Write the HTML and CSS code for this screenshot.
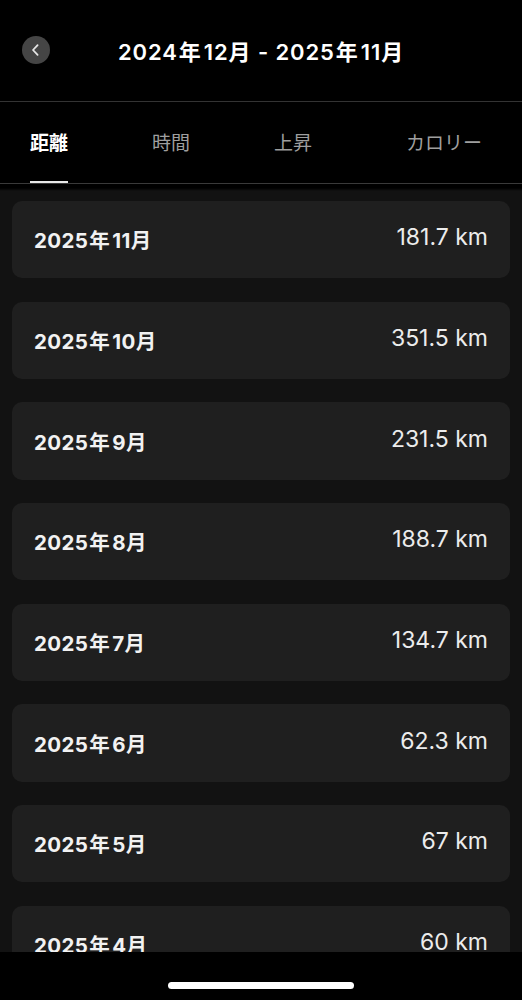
FILE: index.html
```html
<!DOCTYPE html>
<html lang="ja">
<head>
<meta charset="utf-8">
<title>2024年12月 - 2025年11月</title>
<link rel="stylesheet" href="styles.css">
</head>
<body>
<div class="screen">
  <header class="header">
    <button class="back" aria-label="戻る">
      <svg width="28" height="28" viewBox="0 0 28 28"><path d="M15.6 9.2 L11 14 L15.6 18.8" fill="none" stroke="#e6e6e6" stroke-width="1.8" stroke-linecap="round" stroke-linejoin="round"/></svg>
    </button>
    <h1 class="title">2024<span class="nen">年</span>12月 - 2025<span class="nen">年</span>11月</h1>
  </header>
  <nav class="tabs">
    <span class="tab active">距離</span>
    <span class="tab">時間</span>
    <span class="tab">上昇</span>
    <span class="tab last">カロリー</span>
  </nav>
  <main class="list">
    <div class="card"><span class="month">2025<span class="nen">年</span>11月</span><span class="value">181.7 km</span></div>
    <div class="card"><span class="month">2025<span class="nen">年</span>10月</span><span class="value">351.5 km</span></div>
    <div class="card"><span class="month">2025<span class="nen">年</span>9月</span><span class="value">231.5 km</span></div>
    <div class="card"><span class="month">2025<span class="nen">年</span>8月</span><span class="value">188.7 km</span></div>
    <div class="card"><span class="month">2025<span class="nen">年</span>7月</span><span class="value">134.7 km</span></div>
    <div class="card"><span class="month">2025<span class="nen">年</span>6月</span><span class="value">62.3 km</span></div>
    <div class="card"><span class="month">2025<span class="nen">年</span>5月</span><span class="value">67 km</span></div>
    <div class="card"><span class="month">2025<span class="nen">年</span>4月</span><span class="value">60 km</span></div>
  </main>
  <footer class="homebar"><span class="indicator"></span></footer>
</div>
</body>
</html>
```
FILE: styles.css
```css
* { box-sizing: border-box; }
html, body {
  margin: 0;
  padding: 0;
  background: #000;
}
body {
  font-family: "Inter", "Noto Sans CJK JP", sans-serif;
  color: #fff;
}
.screen {
  width: 522px;
  height: 1000px;
  display: flex;
  flex-direction: column;
  overflow: hidden;
  background: #000;
}
.header {
  height: 102px;
  flex: none;
  display: flex;
  align-items: center;
  padding: 0 0 2px 22px;
  border-bottom: 1px solid #333;
}
.back {
  width: 28px;
  height: 28px;
  border-radius: 50%;
  background: #454545;
  border: 0;
  padding: 0;
  display: flex;
  align-items: center;
  justify-content: center;
  flex: none;
}
.back svg { display: block; }
.title {
  margin: 0 0 0 68px;
  font-size: 22px;
  font-weight: 600;
  letter-spacing: 0.9px;
  white-space: nowrap;
}
.nen {
  margin: 0 2px 0 1px;
}
.tabs {
  height: 82px;
  flex: none;
  display: flex;
  align-items: stretch;
  gap: 84px;
  padding-left: 30px;
  border-bottom: 1px solid #3a3a3a;
}
.tab {
  display: flex;
  align-items: center;
  font-size: 19px;
  color: #9f9f9f;
  border-bottom: 2px solid transparent;
}
.tab.active {
  color: #fff;
  font-weight: 700;
  border-bottom-color: #e8e8e8;
}
.tab.last { margin-left: 10px; }
.list {
  flex: 1;
  min-height: 0;
  overflow: hidden;
  padding: 17px 12px 0;
  background: linear-gradient(#000 0, #000 4px, #121212 7px);
  display: flex;
  flex-direction: column;
  gap: 23.4px;
}
.card {
  flex: none;
  height: 77.3px;
  border-radius: 10px;
  background: #1f1f1f;
  display: flex;
  align-items: center;
  justify-content: space-between;
  padding: 0 22px 1px 22px;
}
.month {
  font-size: 20.5px;
  font-weight: 700;
  letter-spacing: 0.4px;
  color: #f2f2f2;
}
.value {
  font-size: 23px;
  font-weight: 400;
  color: #ececec;
  margin-bottom: 4px;
}
.homebar {
  height: 48px;
  flex: none;
  background: #000;
  display: flex;
  justify-content: center;
  padding-top: 30px;
}
.indicator {
  width: 186px;
  height: 7px;
  border-radius: 4px;
  background: #fff;
}
```
